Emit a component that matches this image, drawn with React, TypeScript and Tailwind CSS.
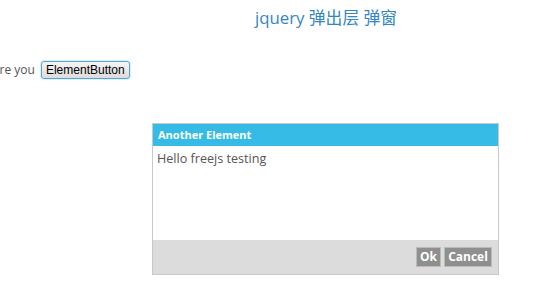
export default function App() {
  return (
    <div className="w-[540px] h-[300px] bg-white overflow-hidden relative" style={{ fontFamily: '"Open Sans", "Noto Sans", sans-serif' }}>
      <div className="pt-[7px] pl-[255px] text-[16.8px] leading-[22px] text-[#3386c2]" style={{ fontFamily: '"Open Sans", "Noto Sans CJK SC", sans-serif' }}>
        jquery 弹出层 弹窗
      </div>
      <div className="mt-[32px] flex items-center ml-[-8px] gap-[6px]">
        <span className="text-[12px] text-[#555]">Are you</span>
        <button className="h-[18px] px-[4px] text-[12px] leading-[14px] text-black border border-[#5aa3c9] rounded-[3px] bg-gradient-to-b from-[#f5f5f5] to-[#dcdcdc] shadow-[0_0_2px_#7fc0e6]" style={{ fontFamily: '"Liberation Sans", Arial, sans-serif' }}>
          ElementButton
        </button>
      </div>
      <div className="absolute left-[152px] top-[123px] w-[347px] h-[152px] border border-[#c8c8c8] flex flex-col">
        <div className="h-[22px] bg-[#35bbe6] text-white text-[11px] font-bold flex items-center px-[5px]">
          Another Element
        </div>
        <div className="flex-1 bg-white px-[4px] pt-[4px] text-[12.6px] text-[#555]">Hello freejs testing</div>
        <div className="h-[34px] bg-[#dcdcdc] flex items-center justify-end gap-[3px] pr-[6px]">
          <button className="h-[20px] w-[25px] bg-[#8f8f8f] text-white text-[12px] font-bold border border-[#bbb] leading-none">Ok</button>
          <button className="h-[20px] w-[48px] bg-[#8f8f8f] text-white text-[12px] font-bold border border-[#bbb] leading-none">Cancel</button>
        </div>
      </div>
    </div>
  );
}
